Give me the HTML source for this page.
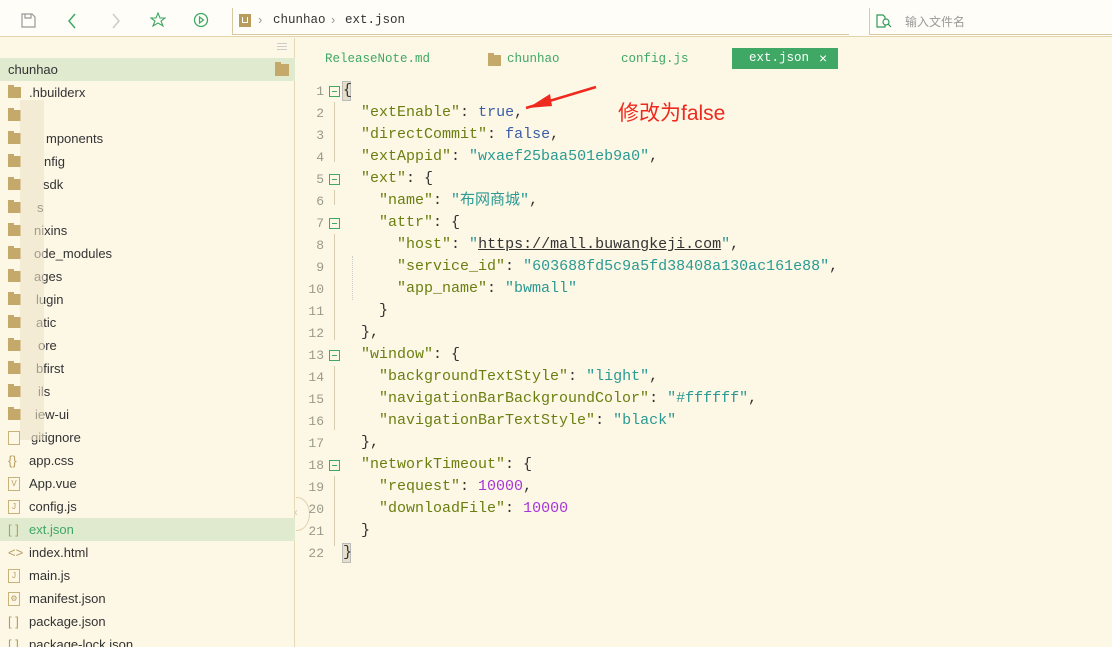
<!DOCTYPE html>
<html><head><meta charset="utf-8">
<style>
*{margin:0;padding:0;box-sizing:border-box}
html{width:1112px;height:647px;overflow:hidden}
body{width:1112px;height:647px;overflow:hidden;background:#fdf7e6;font-family:"Liberation Sans","Noto Sans CJK SC",sans-serif;position:relative}
.top{position:absolute;left:0;top:0;width:1112px;height:37px;background:#fffdf7;border-bottom:1px solid #e2d3a8}
.crumb{position:absolute;left:232px;top:8px;width:617px;height:27px;border-left:1px solid #d9c9a0;border-bottom:1px solid #d9c9a0}
.srch{position:absolute;left:869px;top:8px;width:243px;height:27px;border-left:1px solid #d9c9a0;border-bottom:1px solid #d9c9a0}
.side{position:absolute;left:0;top:38px;width:295px;height:609px;border-right:1px solid #e6d9b5}
.row{position:absolute;left:0;width:295px;height:23px;font-size:13px;color:#333;line-height:23px}
.row .t{position:absolute;left:29px}
.fold{position:absolute;left:8px;top:6px;width:13px;height:11px;background:#c4a96a}
.fold:before{content:"";position:absolute;left:0;top:-2px;width:6px;height:3px;background:#c4a96a}
.fi{position:absolute;left:8px;top:5px;width:12px;height:14px;border:1px solid #c9b17a;font-size:8px;line-height:11px;text-align:center;color:#b89c5e}
.mono{font-family:"Liberation Mono",monospace}
.ln{position:absolute;left:300px;width:24px;text-align:right;font-family:"Liberation Mono",monospace;font-size:13px;color:#9a9a8a}
.cl{position:absolute;left:343px;font-family:"Liberation Mono","Noto Sans CJK SC",monospace;font-size:15px;white-space:pre;color:#333;line-height:22px}
.k{color:#6b7f10}.s{color:#2a9a93}.b{color:#3b5ea6}.n{color:#a637d8}
.fb{position:absolute;left:329px;width:11px;height:11px;border:1px solid #3fa864}
.fb:after{content:"";position:absolute;left:2px;top:4px;width:5px;height:1px;background:#3fa864}
.gl{position:absolute;left:334px;width:1px;background:#d8ccb0}
.tab{position:absolute;top:49px;height:21px;font-family:"Liberation Mono",monospace;font-size:12.5px;line-height:21px;color:#3fa864}
</style></head><body>
<div class="top">
 <svg style="position:absolute;left:21px;top:13px" width="15" height="15"><path d="M1 1h10l3 3v10H1z M4 1v4h6V1" fill="none" stroke="#999" stroke-width="1.2"/></svg>
 <svg style="position:absolute;left:66px;top:13px" width="12" height="16"><path d="M9 1L3 8l6 7" fill="none" stroke="#3fa864" stroke-width="1.5"/></svg>
 <svg style="position:absolute;left:110px;top:13px" width="12" height="16"><path d="M3 1l6 7-6 7" fill="none" stroke="#ccc" stroke-width="1.5"/></svg>
 <svg style="position:absolute;left:150px;top:12px" width="16" height="16"><path d="M8 1l2 5h5l-4 3 2 5-5-3-5 3 2-5-4-3h5z" fill="none" stroke="#3fa864" stroke-width="1.1"/></svg>
 <svg style="position:absolute;left:193px;top:12px" width="16" height="16"><circle cx="8" cy="8" r="6.5" fill="none" stroke="#3fa864" stroke-width="1.3"/><path d="M6.5 5v6l4-3z" fill="none" stroke="#3fa864" stroke-width="1.2"/></svg>
</div>
<div class="crumb"></div><div class="srch"></div>
<div style="position:absolute;left:239px;top:14px;width:12px;height:13px;background:#b89c5e"><div style="position:absolute;left:3px;top:3px;width:6px;height:6px;border:1.5px solid #fff;border-top:none"></div></div>
<div style="position:absolute;left:258px;top:12px;font-size:13px;color:#999">›</div>
<div class="mono" style="position:absolute;left:273px;top:13px;font-size:12.5px;color:#333">chunhao</div>
<div style="position:absolute;left:331px;top:12px;font-size:13px;color:#999">›</div>
<div class="mono" style="position:absolute;left:345px;top:13px;font-size:12.5px;color:#333">ext.json</div>
<svg style="position:absolute;left:876px;top:14px" width="16" height="14"><path d="M1 1h6l2 2v10H1z" fill="none" stroke="#2f9a58" stroke-width="1.2"/><circle cx="10" cy="8" r="3" fill="#fff" stroke="#2f9a58" stroke-width="1.2"/><path d="M12 10l3 3" stroke="#2f9a58" stroke-width="1.2"/></svg>
<div style="position:absolute;left:905px;top:13px;font-size:12px;color:#999">输入文件名</div>

<div class="side">
 <div style="position:absolute;left:277px;top:5px;width:10px;height:7px;border-top:1px solid #ccc;border-bottom:1px solid #ccc"></div>
 <div style="position:absolute;left:277px;top:8px;width:10px;height:1px;background:#ccc"></div>
 <div class="row" style="top:20px;background:#dfeacf"><span class="t" style="left:8px">chunhao</span><div class="fold" style="left:275px;width:14px;height:12px"></div></div>
 <div class="row" style="top:43px"><div class="fold"></div><span class="t">.hbuilderx</span></div>
 <div class="row" style="top:66px"><div class="fold"></div><span class="t"></span></div>
 <div class="row" style="top:89px"><div class="fold"></div><span class="t" style="left:46px">mponents</span></div>
 <div class="row" style="top:112px"><div class="fold"></div><span class="t" style="left:44px">nfig</span></div>
 <div class="row" style="top:135px"><div class="fold"></div><span class="t" style="left:43px">sdk</span></div>
 <div class="row" style="top:158px"><div class="fold"></div><span class="t" style="left:37px">s</span></div>
 <div class="row" style="top:181px"><div class="fold"></div><span class="t" style="left:34px">nixins</span></div>
 <div class="row" style="top:204px"><div class="fold"></div><span class="t" style="left:34px">ode_modules</span></div>
 <div class="row" style="top:227px"><div class="fold"></div><span class="t" style="left:34px">ages</span></div>
 <div class="row" style="top:250px"><div class="fold"></div><span class="t" style="left:36px">lugin</span></div>
 <div class="row" style="top:273px"><div class="fold"></div><span class="t" style="left:36px">atic</span></div>
 <div class="row" style="top:296px"><div class="fold"></div><span class="t" style="left:38px">ore</span></div>
 <div class="row" style="top:319px"><div class="fold"></div><span class="t" style="left:36px">bfirst</span></div>
 <div class="row" style="top:342px"><div class="fold"></div><span class="t" style="left:38px">ils</span></div>
 <div class="row" style="top:365px"><div class="fold"></div><span class="t" style="left:35px">iew-ui</span></div>
 <div class="row" style="top:388px"><div class="fi"></div><span class="t" style="left:31px">gitignore</span></div>
 <div style="position:absolute;left:20px;top:62px;width:24px;height:340px;background:rgba(236,226,200,0.6)"></div>
 <div class="row" style="top:411px"><span style="position:absolute;left:8px;color:#b89c5e">{}</span><span class="t">app.css</span></div>
 <div class="row" style="top:434px"><div class="fi">V</div><span class="t">App.vue</span></div>
 <div class="row" style="top:457px"><div class="fi">J</div><span class="t">config.js</span></div>
 <div class="row" style="top:480px;background:#dfeacf"><span style="position:absolute;left:8px;color:#b89c5e">[ ]</span><span class="t" style="color:#3fa864">ext.json</span></div>
 <div class="row" style="top:503px"><span style="position:absolute;left:8px;color:#b89c5e">&lt;&gt;</span><span class="t">index.html</span></div>
 <div class="row" style="top:526px"><div class="fi">J</div><span class="t">main.js</span></div>
 <div class="row" style="top:549px"><div class="fi">⚙</div><span class="t">manifest.json</span></div>
 <div class="row" style="top:572px"><span style="position:absolute;left:8px;color:#b89c5e">[ ]</span><span class="t">package.json</span></div>
 <div class="row" style="top:595px"><span style="position:absolute;left:8px;color:#b89c5e">[ ]</span><span class="t">package-lock.json</span></div>
</div>
<div style="position:absolute;left:284px;top:497px;width:26px;height:34px;border-radius:50%;border:1px solid #e0d2ae;border-left:none;clip-path:inset(0 0 0 12px)"></div>
<div style="position:absolute;left:294px;top:505px;font-size:12px;color:#ccc">‹</div>

<div class="tab" style="left:325px">ReleaseNote.md</div>
<div class="fold" style="left:488px;top:55px"></div>
<div class="tab" style="left:507px">chunhao</div>
<div class="tab" style="left:621px">config.js</div>
<div class="tab" style="left:732px;top:48px;width:106px;background:#3fa864;color:#fff;padding-left:17px">ext.json<span style="position:absolute;left:87px;font-family:'Liberation Sans';font-size:14px">×</span></div>

<div class="gl" style="top:102px;height:60px"></div>
<div class="gl" style="top:190px;height:15px"></div>
<div class="gl" style="top:234px;height:106px"></div>
<div class="gl" style="top:366px;height:64px"></div>
<div class="gl" style="top:476px;height:70px"></div>
<div style="position:absolute;left:352px;top:256px;width:1px;height:44px;border-left:1px dotted #ccc"></div>
<div style="position:absolute;left:342px;top:81px;width:9px;height:20px;background:#e6dfc8;border:1px solid #bbb"></div>
<div style="position:absolute;left:342px;top:543px;width:9px;height:20px;background:#e6dfc8;border:1px solid #bbb"></div>

<div class="ln" style="top:84px">1</div><div class="fb" style="top:86px"></div>
<div class="ln" style="top:106px">2</div><div class="ln" style="top:128px">3</div><div class="ln" style="top:150px">4</div>
<div class="ln" style="top:172px">5</div><div class="fb" style="top:174px"></div>
<div class="ln" style="top:194px">6</div>
<div class="ln" style="top:216px">7</div><div class="fb" style="top:218px"></div>
<div class="ln" style="top:238px">8</div><div class="ln" style="top:260px">9</div><div class="ln" style="top:282px">10</div>
<div class="ln" style="top:304px">11</div><div class="ln" style="top:326px">12</div>
<div class="ln" style="top:348px">13</div><div class="fb" style="top:350px"></div>
<div class="ln" style="top:370px">14</div><div class="ln" style="top:392px">15</div><div class="ln" style="top:414px">16</div><div class="ln" style="top:436px">17</div>
<div class="ln" style="top:458px">18</div><div class="fb" style="top:460px"></div>
<div class="ln" style="top:480px">19</div><div class="ln" style="top:502px">20</div><div class="ln" style="top:524px">21</div><div class="ln" style="top:546px">22</div>

<div class="cl" style="top:80px">{</div>
<div class="cl" style="top:102px">  <span class="k">"extEnable"</span>: <span class="b">true</span>,</div>
<div class="cl" style="top:124px">  <span class="k">"directCommit"</span>: <span class="b">false</span>,</div>
<div class="cl" style="top:146px">  <span class="k">"extAppid"</span>: <span class="s">"wxaef25baa501eb9a0"</span>,</div>
<div class="cl" style="top:168px">  <span class="k">"ext"</span>: {</div>
<div class="cl" style="top:190px">    <span class="k">"name"</span>: <span class="s">"布网商城"</span>,</div>
<div class="cl" style="top:212px">    <span class="k">"attr"</span>: {</div>
<div class="cl" style="top:234px">      <span class="k">"host"</span>: <span class="s">"<u style="color:#333">https://mall.buwangkeji.com</u>"</span>,</div>
<div class="cl" style="top:256px">      <span class="k">"service_id"</span>: <span class="s">"603688fd5c9a5fd38408a130ac161e88"</span>,</div>
<div class="cl" style="top:278px">      <span class="k">"app_name"</span>: <span class="s">"bwmall"</span></div>
<div class="cl" style="top:300px">    }</div>
<div class="cl" style="top:322px">  },</div>
<div class="cl" style="top:344px">  <span class="k">"window"</span>: {</div>
<div class="cl" style="top:366px">    <span class="k">"backgroundTextStyle"</span>: <span class="s">"light"</span>,</div>
<div class="cl" style="top:388px">    <span class="k">"navigationBarBackgroundColor"</span>: <span class="s">"#ffffff"</span>,</div>
<div class="cl" style="top:410px">    <span class="k">"navigationBarTextStyle"</span>: <span class="s">"black"</span></div>
<div class="cl" style="top:432px">  },</div>
<div class="cl" style="top:454px">  <span class="k">"networkTimeout"</span>: {</div>
<div class="cl" style="top:476px">    <span class="k">"request"</span>: <span class="n">10000</span>,</div>
<div class="cl" style="top:498px">    <span class="k">"downloadFile"</span>: <span class="n">10000</span></div>
<div class="cl" style="top:520px">  }</div>
<div class="cl" style="top:542px">}</div>

<svg style="position:absolute;left:522px;top:84px" width="80" height="30"><path d="M4 24L74 3" stroke="#ee2a1e" stroke-width="2.5"/><path d="M6 24L28 10L30 22z" fill="#ee2a1e"/></svg>
<div style="position:absolute;left:618px;top:97px;font-size:21px;color:#ee2a1e">修改为false</div>
</body></html>
